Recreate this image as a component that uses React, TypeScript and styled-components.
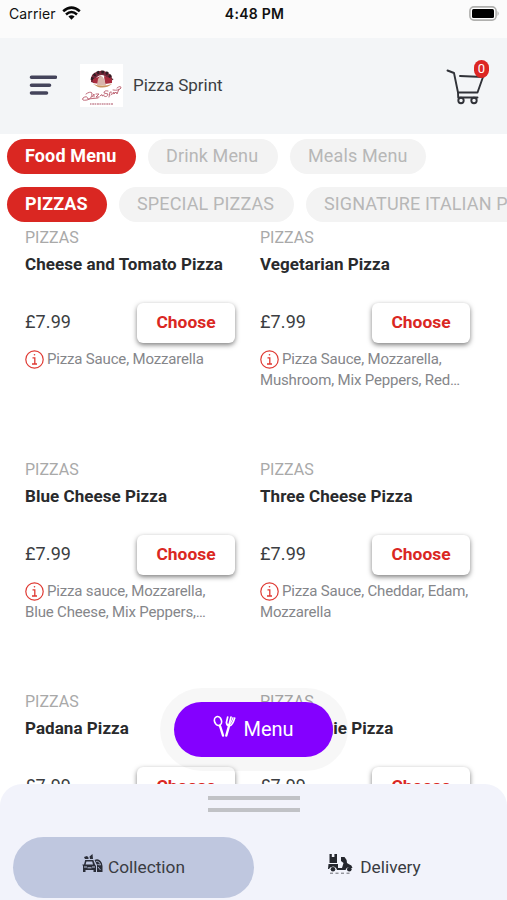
import React from "react";
import styled, { createGlobalStyle } from "styled-components";

const GlobalStyle = createGlobalStyle`
  *, *::before, *::after { box-sizing: border-box; }
  html, body { margin: 0; padding: 0; background: #fff; overflow: hidden; }
  body { font-family: Roboto, "Liberation Sans", sans-serif; color: #3c3e42; }
  button { font: inherit; border: 0; padding: 0; }
`;

const Screen = styled.main`
  position: relative;
  display: flex;
  flex-direction: column;
  width: 507px;
  height: 900px;
  overflow: hidden;
  background: #fff;
`;

const StatusBar = styled.div`
  display: grid;
  grid-template-columns: 1fr auto 1fr;
  flex: none;
  align-items: center;
  height: 38px;
  padding: 0 7px 11px 9px;
  background: #fbfbfb;
  color: #111;
  font-family: Inter, Roboto, sans-serif;
  font-size: 14px;
`;

const Carrier = styled.div`
  display: flex;
  align-items: center;
  gap: 6px;
  letter-spacing: 0.1px;
`;

const Clock = styled.div`
  font-weight: 600;
  letter-spacing: 0.25px;
`;

const BatterySlot = styled.div`
  display: flex;
  justify-content: flex-end;
`;

const Header = styled.header`
  display: flex;
  flex: none;
  align-items: center;
  height: 96px;
  padding: 0 17px 2px 29px;
  background: #f3f5f7;
`;

const Logo = styled.div`
  width: 43px;
  height: 43px;
  margin-left: 23px;
  background: #fff;
`;

const Restaurant = styled.h1`
  flex: 1;
  margin: 0 0 0 10px;
  font-size: 17px;
  font-weight: 400;
`;

const Cart = styled.div`
  position: relative;
  width: 44px;
  height: 46px;
  margin-bottom: 3px;
`;

const CartBadge = styled.span`
  position: absolute;
  top: -1px;
  right: 1px;
  width: 15px;
  height: 18px;
  border-radius: 8px;
  background: #dc2623;
  color: #fff;
  font-size: 13px;
  line-height: 18px;
  text-align: center;
`;

const Tabs = styled.nav`
  display: flex;
  flex: none;
  gap: 12px;
  height: 48px;
  padding: 5px 0 0 7px;
`;

const Tab = styled.button<{ $active?: boolean; $width: number }>`
  flex: none;
  width: ${(p) => p.$width}px;
  height: 35px;
  padding: 0 0 2px 18px;
  border-radius: 18px;
  background: ${(p) => (p.$active ? "#da2722" : "#f3f3f3")};
  color: ${(p) => (p.$active ? "#fff" : "#b7b7b7")};
  font-size: 18px;
  font-weight: ${(p) => (p.$active ? 700 : 400)};
  letter-spacing: 0.13px;
  text-align: left;
  white-space: nowrap;
`;

const Products = styled.section`
  display: grid;
  flex: none;
  grid-template-columns: 210px 210px;
  grid-auto-rows: 232px;
  column-gap: 25px;
  padding: 0 0 0 25px;
`;

const Product = styled.article`
  display: flex;
  flex-direction: column;
`;

const Category = styled.div`
  height: 20px;
  margin-top: -2px;
  color: #a9a9a9;
  font-size: 16px;
  line-height: 20px;
`;

const Name = styled.h2`
  height: 22px;
  margin: 5px 0 0;
  color: #292a2c;
  font-size: 17px;
  font-weight: 700;
  letter-spacing: 0.05px;
  line-height: 22px;
  white-space: nowrap;
`;

const PriceRow = styled.div`
  display: flex;
  align-items: center;
  justify-content: space-between;
  height: 40px;
  margin-top: 28px;
`;

const Price = styled.span`
  padding-bottom: 3px;
  font-size: 18px;
  letter-spacing: 0.1px;
`;

const Choose = styled.button`
  width: 98px;
  height: 40px;
  padding-bottom: 2px;
  border-radius: 6px;
  background: #fff;
  box-shadow: 0 2px 5px rgba(0, 0, 0, 0.5);
  color: #da2722;
  font-size: 17.4px;
  font-weight: 700;
`;

const Ingredients = styled.p`
  margin: 6px 0 0;
  color: #85868a;
  font-size: 15px;
  letter-spacing: -0.17px;
  line-height: 21px;
  white-space: pre;
`;

const InfoSvg = styled.svg`
  margin: 0 3px 0 0;
  vertical-align: -5px;
`;

const MenuHalo = styled.div`
  position: absolute;
  top: 688px;
  left: 160px;
  width: 188px;
  height: 83px;
  padding: 14px;
  border-radius: 42px;
  background: rgba(0, 0, 0, 0.03);
`;

const MenuButton = styled.button`
  display: flex;
  align-items: center;
  justify-content: center;
  gap: 7px;
  width: 159px;
  height: 55px;
  padding-bottom: 1px;
  border-radius: 28px;
  background: #8400ff;
  color: #fff;
  font-size: 20px;

  svg {
    margin-bottom: 6px;
  }
`;

const Sheet = styled.footer`
  position: absolute;
  bottom: 0;
  left: 0;
  width: 507px;
  height: 116px;
  border-radius: 22px 22px 0 0;
  background: #f2f3fb;
`;

const Grip = styled.div`
  width: 92px;
  height: 16px;
  margin: 12px auto 25px 208px;
  border-top: 4px solid #c1c2c6;
  border-bottom: 4px solid #c1c2c6;
`;

const Modes = styled.div`
  display: grid;
  grid-template-columns: 241px 241px;
  padding-left: 13px;
`;

const Mode = styled.button<{ $selected?: boolean }>`
  display: flex;
  align-items: center;
  justify-content: center;
  gap: ${(p) => (p.$selected ? 5 : 7)}px;
  height: 61px;
  padding-bottom: 2px;
  border-radius: 31px;
  background: ${(p) => (p.$selected ? "#bfc7df" : "transparent")};
  color: #3a3c42;
  font-size: 17.3px;

  svg {
    margin-bottom: 5px;
  }
`;

const WifiIcon = () => (
  <svg width="19" height="15" viewBox="0 0 19 15">
    <g fill="none" stroke="#080808" strokeWidth="2.6">
      <path d="M1.2 5.2 Q9.5 -2 17.8 5.2" />
      <path d="M4 8.4 Q9.5 3.6 15 8.4" />
    </g>
    <path d="M6.4 10.5Q9.5 8 12.6 10.5L9.5 13.8Z" fill="#080808" />
  </svg>
);

const BatteryIcon = () => (
  <svg width="31" height="15" viewBox="0 0 31 15">
    <rect x=".9" y=".9" width="26.2" height="13.2" rx="4" fill="#fff" stroke="#b0b0ae" strokeWidth="1.6" />
    <rect x="3" y="3" width="22" height="9" rx="1.5" fill="#000" />
    <path d="M28.5 5Q31 7.5 28.5 10Z" fill="#b0b0ae" />
  </svg>
);

const BurgerIcon = () => (
  <svg width="28" height="22" viewBox="0 0 28 22" stroke="#44445b" strokeWidth="3.6" strokeLinecap="round">
    <path d="M2.5 3.2H26.5M2.5 11.2H20.5M2.5 19H17.5" />
  </svg>
);

const PizzaLogo = () => (
  <svg width="43" height="43" viewBox="0 0 43 43">
    <path d="M11 18Q10 9 18 7.5Q23 5.5 28 9Q33 11 32 18L29 19Q26 11 22 11Q16 11 14 19Z" fill="#77283a" />
    <path d="M12 16Q14 8 22 8Q29 8 32 16" fill="none" stroke="#321c23" strokeWidth="3" strokeDasharray="2.4 2" />
    <path d="M13 15L21 12L20 20L13 19ZM24 12L32 15L32 19L25 20Z" fill="#a92c3e" />
    <path d="M18 15Q21 9 24 15L26 21H17Z" fill="#d9b5ab" />
    <path d="M13 20Q22 23 32 20Q26 25 18 23Z" fill="#c99461" />
    <g fill="none" stroke="#b95b6c" strokeWidth=".9" strokeLinecap="round">
      <path d="M6 30Q10 27 12 29Q12 35 7 36Q1 37 3 34Q7 31 8 35L18 34" />
      <path d="M12 33L14 30L14 33M16 30L19 30L16 33L19 33M20 32Q23 29 22 32L24 31M28 27Q24 26 24 29L28 30Q27 34 24 32M29 33L30 28Q34 28 31 31M33 30L34 28L34 30L36 28L37 30L39 25M33 26Q39 27 41 24Q41 21 37 24" />
    </g>
    <path d="M10 40H33" stroke="#c88b98" strokeWidth="1.7" strokeDasharray="1.5 .7 2 .5" />
  </svg>
);

const CartIcon = () => (
  <svg width="44" height="46" viewBox="0 0 44 46" fill="none" stroke="#303238" strokeWidth="1.9" strokeLinecap="round" strokeLinejoin="round">
    <path d="M1.5 9.5L8 12L12 31.5H31.5L37 16L14 15M12 31.5L12.2 36.5H31.5" />
    <circle cx="15" cy="39.5" r="2.7" />
    <circle cx="28" cy="39.5" r="2.7" />
  </svg>
);

const InfoIcon = () => (
  <InfoSvg width="19" height="19" viewBox="0 0 19 19" fill="none" stroke="#df3932">
    <circle cx="9.5" cy="9.5" r="8.7" strokeWidth="1.2" />
    <path d="M7.5 7.8H9.8V14M7 14H12" strokeWidth="1.3" />
    <circle cx="9.5" cy="4.8" r=".8" fill="#df3932" stroke="none" />
  </InfoSvg>
);

const CutleryIcon = () => (
  <svg width="23" height="23" viewBox="0 0 23 23" fill="none" stroke="#fff" strokeLinecap="round">
    <ellipse cx="5" cy="6" rx="3.5" ry="4.5" transform="rotate(-18 5 6)" strokeWidth="1.7" />
    <path d="M7 11L10 20.5" strokeWidth="2.4" />
    <path d="M16 11L13.3 20.5" strokeWidth="2.4" />
    <path d="M14.7 2L13.4 7.5Q14 11 16.5 10.6Q19.3 11 21.7 3M18 2L16 10" strokeWidth="1.7" />
    <path d="M16.2 9Q18 9 20 2.5" strokeWidth="1.2" />
  </svg>
);

const CollectionIcon = () => (
  <svg width="21" height="20" viewBox="0 0 21 20" fill="#2a2d38">
    <path d="M3.2 6H11.3L13 10.5L14 12V18H11.5V16H3.5V18H1V12L.3 10.5H2ZM4.4 7.5L3.6 10.5H11L10.2 7.5Z" fillRule="evenodd" />
    <path d="M2 3L5 2L6.5 3.5V5H3ZM7.5 2.5L10.5 0L11 5H8Z" />
    <path d="M12.5 6Q16 4 18.5 7Q20.5 9 20.5 12V18H15V11Z" />
    <path d="M2 13H5M10 13H13M5.5 13.8H9.5" stroke="#bfc7df" strokeWidth="1" />
    <path d="M14 7.4Q17.6 6.8 18.5 11L15.5 10.5M16 13L18.5 16" fill="none" stroke="#bfc7df" strokeWidth=".8" />
  </svg>
);

const DeliveryIcon = () => (
  <svg width="25" height="21" viewBox="0 0 25 21" fill="#25272e">
    <path d="M1.5 0H3.8V3H6.4V0H9V9H1.5Z" />
    <path d="M.5 10H10V14H14L15.5 9L13 7V3H16.5Q18.8 5 19 9L21 10.2Q24 11 24.5 14H22Q19 12 17.5 16H9Q8 12.5 5 12.5Q2 12.5 1 15H0Z" />
    <circle cx="5" cy="15.3" r="2.3" />
    <circle cx="21.3" cy="15.3" r="2.3" />
    <path d="M2 19.2H24" stroke="#6b6c73" strokeWidth="1" strokeDasharray="3 2.5" />
  </svg>
);

const products = [
  ["Cheese and Tomato Pizza", "Pizza Sauce, Mozzarella"],
  ["Vegetarian Pizza", "Pizza Sauce, Mozzarella,\nMushroom, Mix Peppers, Red…"],
  ["Blue Cheese Pizza", "Pizza sauce, Mozzarella,\nBlue Cheese, Mix Peppers,…"],
  ["Three Cheese Pizza", "Pizza Sauce, Cheddar, Edam,\nMozzarella"],
  ["Padana Pizza", ""],
  ["The Veggie Pizza", ""],
];

export default function App() {
  return (
    <Screen>
      <GlobalStyle />
      <StatusBar>
        <Carrier>Carrier <WifiIcon /></Carrier>
        <Clock>4:48 PM</Clock>
        <BatterySlot><BatteryIcon /></BatterySlot>
      </StatusBar>
      <Header>
        <BurgerIcon />
        <Logo><PizzaLogo /></Logo>
        <Restaurant>Pizza Sprint</Restaurant>
        <Cart><CartIcon /><CartBadge>0</CartBadge></Cart>
      </Header>
      <Tabs>
        <Tab $active $width={129}>Food Menu</Tab>
        <Tab $width={130}>Drink Menu</Tab>
        <Tab $width={136}>Meals Menu</Tab>
      </Tabs>
      <Tabs>
        <Tab $active $width={100}>PIZZAS</Tab>
        <Tab $width={175}>SPECIAL PIZZAS</Tab>
        <Tab $width={256}>SIGNATURE ITALIAN PIZZAS</Tab>
      </Tabs>
      <Products>
        {products.map(([name, ingredients]) => (
          <Product key={name}>
            <Category>PIZZAS</Category>
            <Name>{name}</Name>
            <PriceRow><Price>£7.99</Price><Choose>Choose</Choose></PriceRow>
            {ingredients && <Ingredients><InfoIcon />{ingredients}</Ingredients>}
          </Product>
        ))}
      </Products>
      <MenuHalo>
        <MenuButton><CutleryIcon />Menu</MenuButton>
      </MenuHalo>
      <Sheet>
        <Grip />
        <Modes>
          <Mode $selected><CollectionIcon />Collection</Mode>
          <Mode><DeliveryIcon />Delivery</Mode>
        </Modes>
      </Sheet>
    </Screen>
  );
}
